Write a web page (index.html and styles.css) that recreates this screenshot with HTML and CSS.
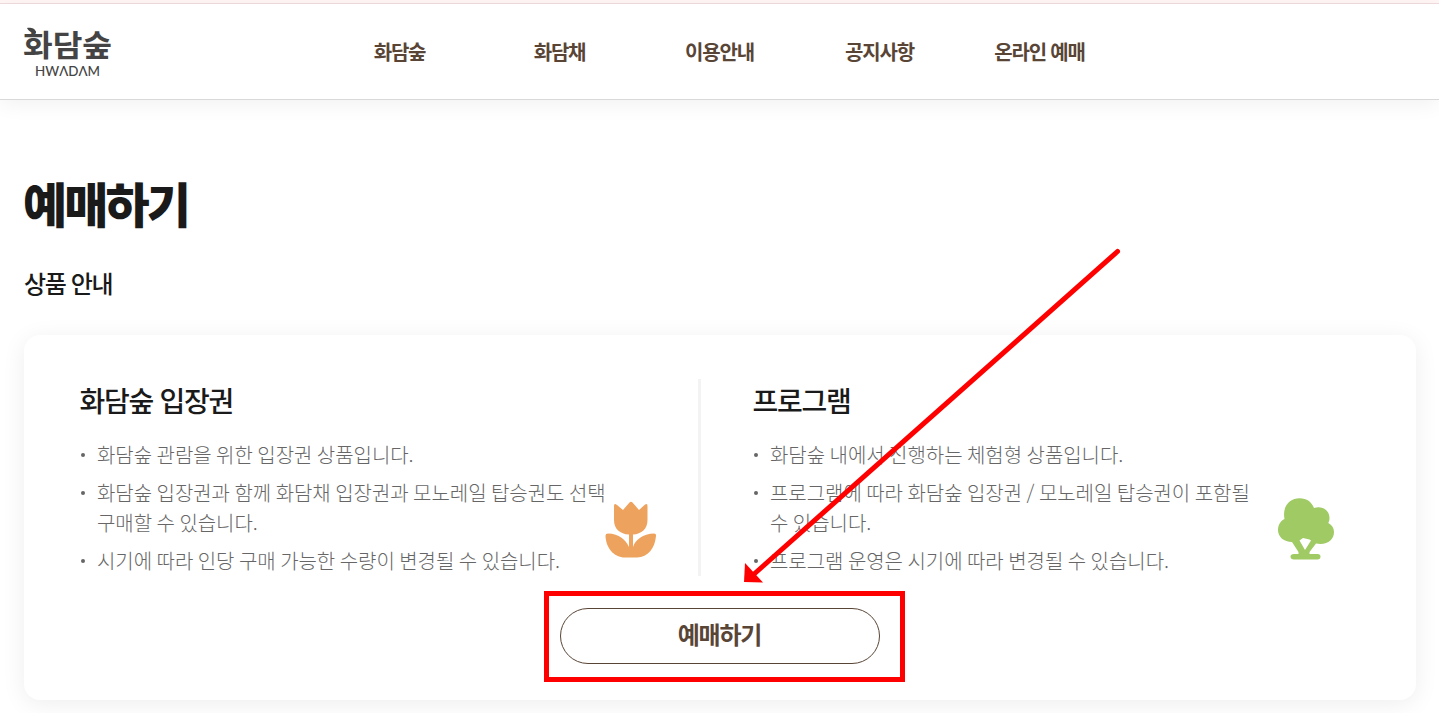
FILE: index.html
```html
<!DOCTYPE html>
<html lang="ko">
<head>
<meta charset="utf-8">
<title>화담숲 예매하기</title>
<link rel="stylesheet" href="styles.css">
</head>
<body>
<div class="strip"></div>
<header class="header">
  <svg class="logo" width="90" height="52" viewBox="0 0 90 52" fill="#444" aria-label="화담숲 HWADAM">
    <path d="M3 2C6 1.500 12 2 12 7C7 7 5 5.500 3 2Z"/>
    <text class="logo-ko" x="-1" y="30" textLength="89" lengthAdjust="spacingAndGlyphs">화담숲</text>
    <text class="logo-en" x="11" y="50" textLength="65" lengthAdjust="spacingAndGlyphs">HWΛDΛM</text>
  </svg>
  <nav class="nav">
    <a>화담숲</a><a>화담채</a><a>이용안내</a><a>공지사항</a><a>온라인 예매</a>
  </nav>
</header>
<main class="main">
  <h1 class="title">예매하기</h1>
  <h2 class="subtitle">상품 안내</h2>
  <section class="card">
    <div class="products">
      <article class="product">
        <h3 class="product-name">화담숲 입장권</h3>
        <ul class="notes">
          <li>화담숲 관람을 위한 입장권 상품입니다.</li>
          <li>화담숲 입장권과 함께 화담채 입장권과 모노레일 탑승권도 선택<br>구매할 수 있습니다.</li>
          <li>시기에 따라 인당 구매 가능한 수량이 변경될 수 있습니다.</li>
        </ul>
        <svg class="icon tulip" width="52" height="58" viewBox="0 0 52 58" fill="#eda35d">
          <path d="M9 5Q9 1.500 12 4L18 9L24.500 1.500Q26 0 27.500 1.500L34 9L39.500 4Q42.500 1.500 42.500 5V19C42.500 28 36.500 33 28 33.600V46C30 39 38 32.500 49 32.500Q51.500 32.500 51 35C50 47 43 56.500 32 56.500H20C9 56.500 1 47 .5 35Q.3 32.500 3 32.500C14 32.500 21 39 24 46V33.600C15 33 9 28 9 19Z"/>
        </svg>
      </article>
      <article class="product second">
        <h3 class="product-name">프로그램</h3>
        <ul class="notes">
          <li>화담숲 내에서 진행하는 체험형 상품입니다.</li>
          <li>프로그램에 따라 화담숲 입장권 / 모노레일 탑승권이 포함될<br>수 있습니다.</li>
          <li>프로그램 운영은 시기에 따라 변경될 수 있습니다.</li>
        </ul>
        <svg class="icon tree" width="56" height="62" viewBox="0 0 56 62" fill="#9fca64">
          <path fill-rule="evenodd" d="M6.500 21C4 8 12 .3 21.500 .3C29 .3 33.500 4 36 10C44 7.500 51.500 12 51.500 20C51.500 22 51 23.500 50.300 25C54 27 56 30 56 34C56 42 49 47.500 38 45.500L31.500 54V56H39.500Q42.500 56 42.500 58.500Q42.500 61.500 39.500 61.500H16Q12.500 61.500 12.500 58.500Q12.500 56 16 56H20.500V54L14 44C6 44 0 39 0 32C0 27 2.500 23 6.500 21ZM21.500 42.500L27 52L33 42.500L31.500 41.500L25 40Z"/>
        </svg>
      </article>
    </div>
    <button class="reserve">예매하기</button>
  </section>
</main>
<div class="highlight"></div>
<svg class="arrow" width="1439" height="713" viewBox="0 0 1439 713">
  <path d="M1117.500 251.500L753 575" fill="none" stroke="red" stroke-width="5" stroke-linecap="round"/>
  <path d="M744 582L745 563L763 582.500Z" fill="red"/>
</svg>
</body>
</html>
```
FILE: styles.css
```css
* { box-sizing: border-box; margin: 0; padding: 0; }
body {
  width: 1439px;
  height: 713px;
  overflow: hidden;
  position: relative;
  background: #fff;
  color: #1a1a1a;
  font-family: "Noto Sans CJK KR", sans-serif;
}
.strip { height: 4px; background: #fff6f5; border-bottom: 1px solid #f0dcde; }
.header {
  height: 96px;
  padding-left: 24px;
  display: flex;
  align-items: center;
  border-bottom: 1px solid #d9d9d9;
  box-shadow: 0 4px 20px rgba(0, 0, 0, .06);
}
.logo { overflow: visible; }
.logo-ko { font-size: 30px; font-weight: 700; }
.logo-en { font-family: Lato, sans-serif; font-size: 13px; font-weight: 500; }
.nav { display: flex; margin-left: 205.5px; }
.nav a {
  width: 160px;
  text-align: center;
  font-size: 20px;
  line-height: 30px;
  font-weight: 700;
  letter-spacing: -.06em;
  color: #594536;
}
.main { padding: 66px 23px 0 24px; }
.title { font-size: 48px; line-height: 72px; font-weight: 900; letter-spacing: -.06em; margin-left: -1px; }
.subtitle { margin-top: 27px; font-size: 24px; line-height: 36px; font-weight: 500; letter-spacing: -.058em; }
.card {
  height: 365px;
  margin-top: 34px;
  padding-top: 44px;
  border-radius: 16px;
  background: #fff;
  box-shadow: 0 4px 24px rgba(0, 0, 0, .07);
}
.products { display: flex; height: 197px; }
.product { position: relative; width: 677px; padding-left: 56px; border-right: 3px solid #f3f3f3; }
.second { padding-left: 52px; border-right: 0; }
.product-name { font-size: 28px; line-height: 42px; margin-left: -.5px; font-weight: 500; letter-spacing: -.046em; }
.notes {
  list-style: none;
  margin-top: 19px;
  font-size: 20px;
  line-height: 30px;
  font-weight: 300;
  letter-spacing: -.05px;
  word-spacing: -1.05px;
  color: #666;
}
.notes li { position: relative; padding-left: 17px; margin-bottom: 8px; white-space: nowrap; }
.notes li::before {
  content: "";
  position: absolute;
  left: 1px;
  top: 13px;
  width: 4px;
  height: 4px;
  border-radius: 50%;
  background: #666;
}
.icon { position: absolute; }
.tulip { left: 581px; top: 122px; }
.tree { left: 576.5px; top: 119px; }
.reserve {
  display: block;
  width: 320px;
  height: 56px;
  margin: 32px auto 0;
  padding: 0 1px 4px 0;
  border: 1px solid #594536;
  border-radius: 28px;
  background: #fff;
  font: 700 24px/36px "Noto Sans CJK KR", sans-serif;
  letter-spacing: -.05em;
  color: #594536;
}
.highlight { position: absolute; left: 544px; top: 591px; width: 361px; height: 91px; border: 5px solid red; }
.arrow { position: absolute; left: 0; top: 0; }
```
